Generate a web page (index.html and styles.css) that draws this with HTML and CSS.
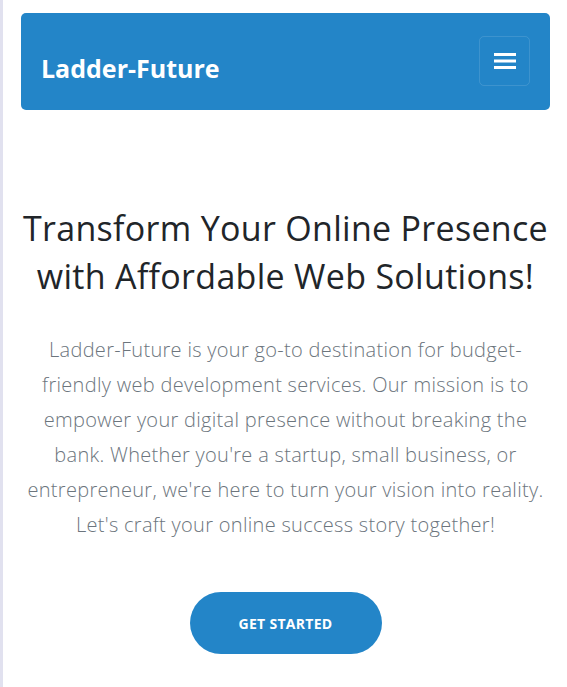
FILE: index.html
```html
<!DOCTYPE html>
<html lang="en">
<head>
<meta charset="utf-8">
<title>Ladder-Future</title>
<link rel="stylesheet" href="styles.css">
</head>
<body>
<div class="page">
  <nav class="navbar">
    <a class="brand" href="#">Ladder-Future</a>
    <button class="toggler" aria-label="Menu">
      <svg width="22" height="18" viewBox="0 0 22 18"><rect x="0" y="1" width="22" height="3" fill="#fff"/><rect x="0" y="7.5" width="22" height="3" fill="#fff"/><rect x="0" y="14" width="22" height="3" fill="#fff"/></svg>
    </button>
  </nav>
  <section class="hero">
    <h1 class="title">Transform Your Online Presence with Affordable Web Solutions!</h1>
    <p class="lead">Ladder-Future is your go-to destination for budget-friendly web development services. Our mission is to empower your digital presence without breaking the bank. Whether you're a startup, small business, or entrepreneur, we're here to turn your vision into reality. Let's craft your online success story together!</p>
    <a class="cta" href="#">GET STARTED</a>
  </section>
</div>
</body>
</html>
```
FILE: styles.css
```css
html, body {
  margin: 0;
  padding: 0;
  background: #fff;
}
body {
  font-family: "Open Sans", "Lato", sans-serif;
  border-left: 3px solid #e1e1ef;
  min-height: 687px;
  box-sizing: border-box;
}
.page {
  padding: 13px 17px 0 18px;
}
.navbar {
  background: #2385c8;
  border-radius: 5px;
  height: 97px;
  box-sizing: border-box;
  padding: 0 20px;
  display: flex;
  align-items: center;
  justify-content: space-between;
}
.brand {
  color: #fff;
  font-weight: 700;
  font-size: 25px;
  text-decoration: none;
  margin-top: 13px;
}
.toggler {
  width: 51px;
  height: 50px;
  margin-top: -2px;
  border: 1px solid rgba(255,255,255,0.12);
  border-radius: 5px;
  background: transparent;
  display: flex;
  align-items: center;
  justify-content: center;
  padding: 0;
}
.hero {
  display: flex;
  flex-direction: column;
  align-items: center;
  text-align: center;
  padding-top: 94px;
}
.title {
  margin: 0;
  font-weight: 400;
  font-size: 34px;
  letter-spacing: 0.3px;
  line-height: 48px;
  color: #212529;
}
.lead {
  margin: 32px 0 0;
  font-size: 20px;
  font-weight: 300;
  letter-spacing: 0.3px;
  line-height: 35px;
  color: #6c757d;
}
.cta {
  margin-top: 50px;
  width: 192px;
  height: 62px;
  border-radius: 31px;
  background: #2385c8;
  color: #fff;
  font-weight: 700;
  font-size: 14px;
  text-decoration: none;
  display: flex;
  align-items: center;
  justify-content: center;
  letter-spacing: 0.3px;
}
```
